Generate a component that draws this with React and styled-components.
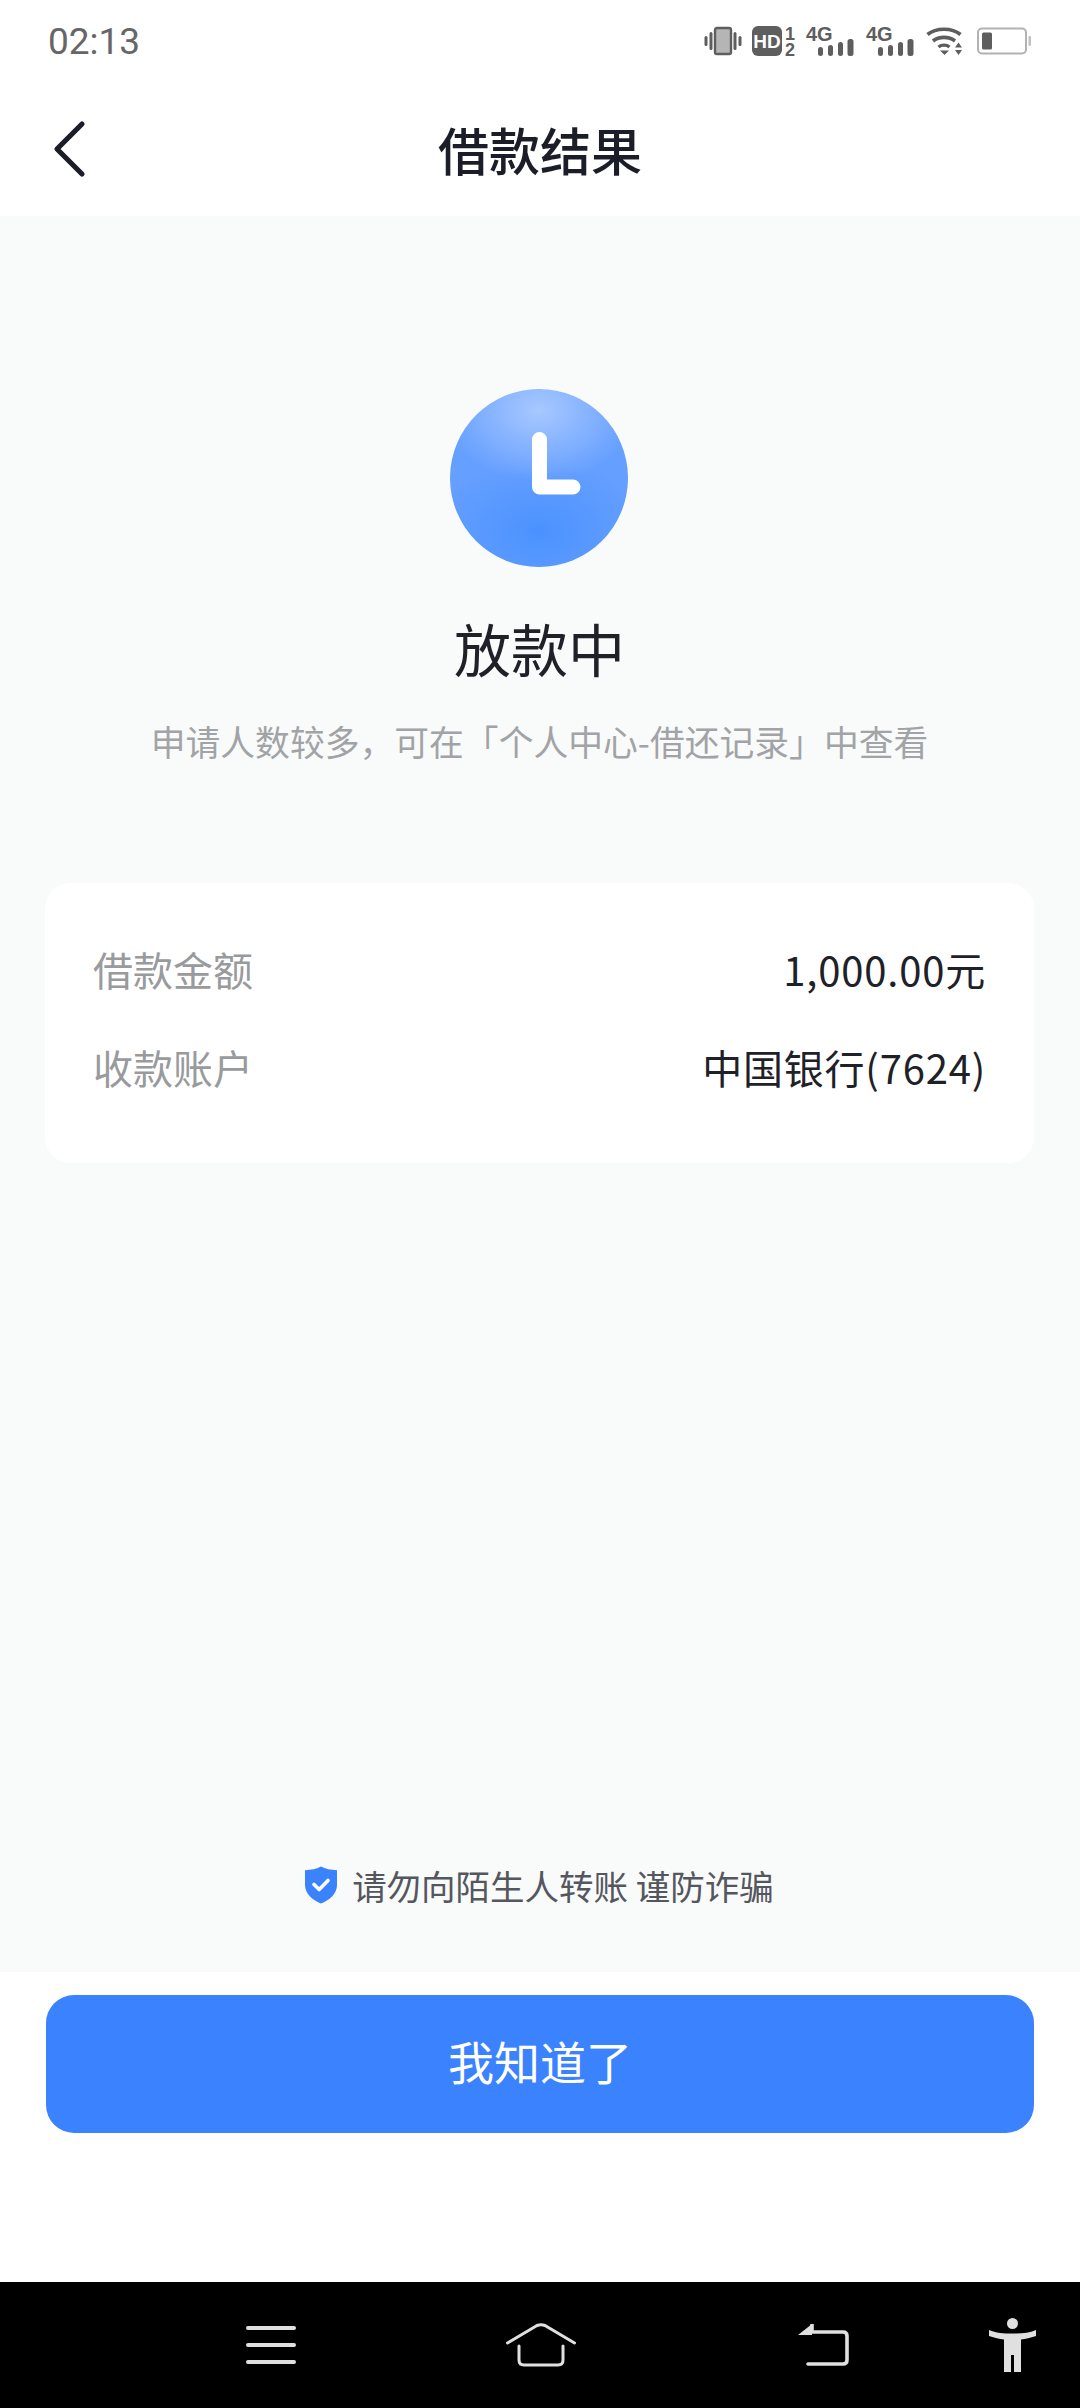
import React from 'react';
import styled, { createGlobalStyle } from 'styled-components';

const Global = createGlobalStyle`
  html, body { margin: 0; padding: 0; background: #fff; }
  * { box-sizing: border-box; }
  body { font-family: "Noto Sans CJK SC", "Noto Sans", sans-serif; }
`;

const Page = styled.div`
  width: 1080px;
  height: 2408px;
  display: flex;
  flex-direction: column;
  background: #fff;
  overflow: hidden;
`;

const StatusBar = styled.div`
  height: 82px;
  padding: 0 48px 0 48px;
  display: flex;
  align-items: center;
  justify-content: space-between;
`;

const Clock = styled.span`
  font-family: Roboto, sans-serif;
  font-size: 37px;
  line-height: 1;
  color: #666;
  letter-spacing: 0;
`;

const StatusIcons = styled.div`
  display: flex;
  align-items: center;
  height: 40px;
`;

const StatusIcon = styled.svg`
  display: block;
  margin-left: ${p => p.$left || 0}px;
  flex: none;
  overflow: visible;
`;

const Header = styled.header`
  height: 134px;
  position: relative;
  display: flex;
  align-items: center;
  justify-content: center;
`;

const BackLink = styled.button`
  position: absolute;
  left: 50px;
  top: 37px;
  width: 40px;
  height: 60px;
  padding: 0;
  border: 0;
  background: none;
`;

const Title = styled.h1`
  margin: 0;
  font-size: 51px;
  font-weight: 500;
  line-height: 70px;
  color: #1b1d28;
`;

const Main = styled.main`
  flex: 1;
  background: #f9fbfa;
  display: flex;
  flex-direction: column;
  align-items: center;
  padding: 173px 46px 62px 45px;
`;

const StatusCircle = styled.div`
  width: 178px;
  height: 178px;
  margin-left: -2px;
  border-radius: 50%;
  flex: none;
  display: flex;
  align-items: center;
  justify-content: center;
  background:
    radial-gradient(ellipse 55% 40% at 50% 12%, #a8c8ff 0%, rgba(168, 200, 255, 0) 100%),
    radial-gradient(ellipse 60% 40% at 50% 80%, #4b92ff 0%, rgba(75, 146, 255, 0) 100%),
    #659fff;
`;

const Result = styled.h2`
  margin: 38px 0 0;
  font-size: 57px;
  font-weight: 400;
  line-height: 84px;
  color: #1f2129;
`;

const Hint = styled.p`
  margin: 27px 0 0;
  font-size: 34.8px;
  line-height: 50px;
  color: #a2a3a6;
  white-space: nowrap;
`;

const Card = styled.section`
  width: 989px;
  height: 280px;
  margin-top: 117px;
  padding: 57px 48px 0;
  background: #fff;
  border-radius: 26px;
  display: flex;
  flex-direction: column;
  gap: 40px;
`;

const Row = styled.div`
  height: 58px;
  display: flex;
  align-items: center;
  justify-content: space-between;
  font-size: 40px;
`;

const RowLabel = styled.span`
  color: #999a9c;
`;

const RowValue = styled.span`
  letter-spacing: 0.8px;
  color: #1f2129;
`;

const Notice = styled.div`
  margin-top: auto;
  display: flex;
  align-items: center;
  gap: 15px;
  font-size: 34.5px;
  line-height: 50px;
  color: #55575f;
  white-space: nowrap;
`;

const Footer = styled.footer`
  height: 310px;
  background: #fff;
  padding: 23px 46px 0;
`;

const PrimaryButton = styled.button`
  display: block;
  width: 988px;
  height: 138px;
  padding: 0 0 8px;
  border: 0;
  border-radius: 28px;
  background: #3b82ff;
  color: #fff;
  font-family: inherit;
  font-size: 46px;
  font-weight: 400;
`;

const NavBar = styled.nav`
  height: 126px;
  background: #000;
  display: flex;
  align-items: center;
  padding-left: 246px;
`;

const NavIcon = styled.svg`
  display: block;
  flex: none;
  margin-left: ${p => p.$left || 0}px;
`;

const G = '#5e5e5e';

const fourG = (
  <>
    <text x="0" y="15" fontFamily="Liberation Sans, sans-serif" fontWeight="700" fontSize="20" fill={G}>4G</text>
    <rect x="12" y="21" width="5" height="9" rx="2.5" fill={G} />
    <rect x="22" y="19" width="5" height="11" rx="2.5" fill={G} />
    <rect x="32" y="16" width="5" height="14" rx="2.5" fill={G} />
    <rect x="41.5" y="13" width="6" height="17" rx="2.5" fill={G} />
  </>
);

export default function App() {
  return (
    <Page>
      <Global />
      <StatusBar>
        <Clock>02:13</Clock>
        <StatusIcons>
          <StatusIcon width="38" height="30" viewBox="0 0 38 30">
            <rect x="0.5" y="10" width="3" height="10" rx="1.5" fill={G} />
            <rect x="5.5" y="6" width="3" height="18" rx="1.5" fill={G} />
            <rect x="11" y="2" width="16" height="26" rx="2" fill="#b5b5b5" stroke={G} strokeWidth="2.4" />
            <rect x="29.5" y="6" width="3" height="18" rx="1.5" fill={G} />
            <rect x="34.5" y="10" width="3" height="10" rx="1.5" fill={G} />
          </StatusIcon>
          <StatusIcon $left={10} width="43" height="30" viewBox="0 0 43 30">
            <rect x="0" y="0" width="30" height="30" rx="6" fill={G} />
            <text x="15" y="22" textAnchor="middle" fontFamily="Liberation Sans, sans-serif" fontWeight="700" fontSize="19" fill="#fff">HD</text>
            <text x="38" y="14" textAnchor="middle" fontFamily="Liberation Sans, sans-serif" fontWeight="700" fontSize="18" fill={G}>1</text>
            <text x="38" y="30" textAnchor="middle" fontFamily="Liberation Sans, sans-serif" fontWeight="700" fontSize="18" fill={G}>2</text>
          </StatusIcon>
          <StatusIcon $left={11} width="47" height="30" viewBox="0 0 47 30">{fourG}</StatusIcon>
          <StatusIcon $left={13} width="47" height="30" viewBox="0 0 47 30">{fourG}</StatusIcon>
          <StatusIcon $left={13} width="38" height="30" viewBox="0 0 38 30">
            <path d="M1.5 8.5C10 1.5 26 1.5 34.5 8.5" fill="none" stroke={G} strokeWidth="3.6" />
            <path d="M7 15C13 10.2 23 10.2 29 15" fill="none" stroke={G} strokeWidth="3.6" />
            <path d="M12.5 21C15.5 18.5 20.5 18.5 23.5 21" fill="none" stroke={G} strokeWidth="3.4" />
            <path d="M14 24.5H23L18.5 29Z" fill={G} />
            <path d="M29 21.5L32.5 16.5L36 21.5Z" fill={G} />
            <path d="M29 24L36 24L32.5 29Z" fill={G} />
          </StatusIcon>
          <StatusIcon $left={13} width="55" height="28" viewBox="0 0 55 28">
            <rect x="1" y="1.5" width="48" height="25" rx="4" fill="#fff" stroke="#b2b2b2" strokeWidth="2" />
            <rect x="5" y="5.5" width="10" height="17" rx="1.5" fill={G} />
            <rect x="51.5" y="9" width="2.5" height="10" rx="1.2" fill="#c0c0c0" />
          </StatusIcon>
        </StatusIcons>
      </StatusBar>

      <Header>
        <BackLink aria-label="返回">
          <svg width="40" height="60" viewBox="0 0 40 60" style={{ display: 'block' }}>
            <path d="M32 7L7 32L32 57" transform="translate(0 -2)" fill="none" stroke="#1b1d28" strokeWidth="5.2" strokeLinecap="round" strokeLinejoin="round" />
          </svg>
        </BackLink>
        <Title>借款结果</Title>
      </Header>

      <Main>
        <StatusCircle>
          <svg width="178" height="178" viewBox="0 0 178 178">
            <path d="M89.5 50.5V98H123" fill="none" stroke="#fff" strokeWidth="15" strokeLinecap="round" strokeLinejoin="round" />
          </svg>
        </StatusCircle>
        <Result>放款中</Result>
        <Hint>申请人数较多，可在「个人中心-借还记录」中查看</Hint>
        <Card>
          <Row>
            <RowLabel>借款金额</RowLabel>
            <RowValue>1,000.00元</RowValue>
          </Row>
          <Row>
            <RowLabel>收款账户</RowLabel>
            <RowValue>中国银行(7624)</RowValue>
          </Row>
        </Card>
        <Notice>
          <svg width="32" height="38" viewBox="0 0 32 38">
            <path d="M16 0.5C20 2.8 26 4 32 4.2V19C32 28 24 34.5 16 37.5C8 34.5 0 28 0 19V4.2C6 4 12 2.8 16 0.5Z" fill="#3b82ff" />
            <path d="M9 18.5L14.2 23.5L23 14.5" fill="none" stroke="#fff" strokeWidth="3.6" strokeLinecap="round" strokeLinejoin="round" />
          </svg>
          <span>请勿向陌生人转账 谨防诈骗</span>
        </Notice>
      </Main>

      <Footer>
        <PrimaryButton>我知道了</PrimaryButton>
      </Footer>

      <NavBar>
        <NavIcon width="50" height="38" viewBox="0 0 50 38">
          <g stroke="#e0e0e0" strokeWidth="4" strokeLinecap="round">
            <path d="M2 2H48" />
            <path d="M2 19H48" />
            <path d="M2 36H48" />
          </g>
        </NavIcon>
        <NavIcon $left={210} width="70" height="44" viewBox="0 0 70 44">
          <g fill="none" stroke="#e0e0e0" strokeLinecap="round" strokeLinejoin="round">
            <path d="M1.5 20L31 2.5Q35 0.8 39 2.5L68.5 20" strokeWidth="3" />
            <path d="M13 23V37Q13 42 18 42H52Q57 42 57 37V23" strokeWidth="3" />
          </g>
        </NavIcon>
        <NavIcon $left={221} width="52" height="42" viewBox="0 0 52 42">
          <path d="M15 0V8H46Q50 8 50 12V36Q50 40 46 40H11" fill="none" stroke="#e0e0e0" strokeWidth="3.6" strokeLinecap="round" strokeLinejoin="round" />
          <path d="M15 0L1 11H15Z" fill="#e0e0e0" />
        </NavIcon>
        <NavIcon $left={140} width="47" height="54" viewBox="0 0 47 54">
          <ellipse cx="23.5" cy="5.5" rx="5.5" ry="5.5" fill="#e0e0e0" />
          <path d="M0 12C7 15 14 15.5 23.5 15.5C33 15.5 40 15 47 12V18C41 20 37 21 32 21.5V54H25V37H22V54H15V21.5C10 21 6 20 0 18Z" fill="#e0e0e0" />
        </NavIcon>
      </NavBar>
    </Page>
  );
}
